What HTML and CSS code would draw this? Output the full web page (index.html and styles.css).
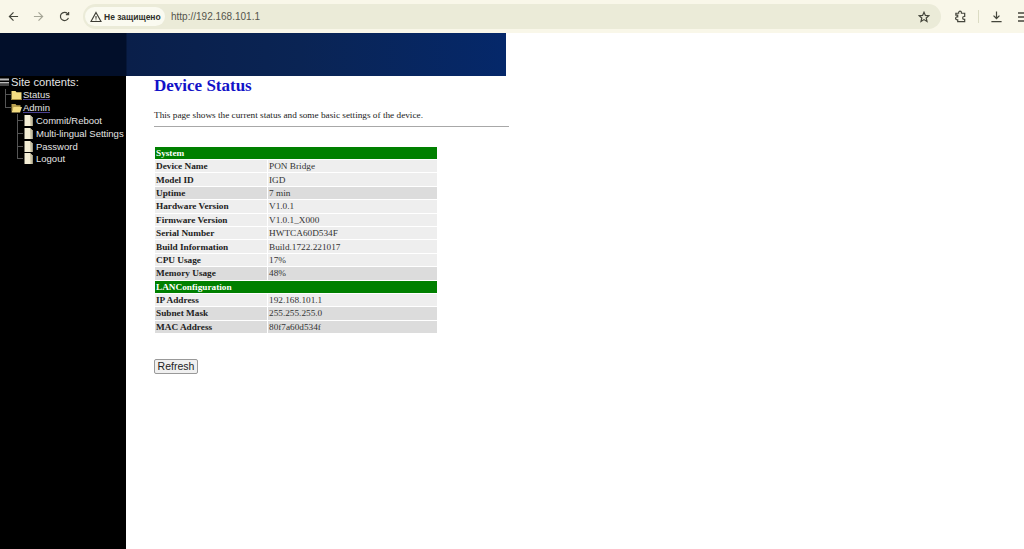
FILE: index.html
```html
<!DOCTYPE html>
<html lang="ru">
<head>
  <meta charset="UTF-8" />
  <title>Device Status</title>
  <link rel="stylesheet" href="styles.css">
</head>
<body>
  <header class="toolbar">
    <svg class="tool-icon back" viewBox="0 0 12 12"><path d="M11 6H1.500M6 1.500L1.500 6 6 10.500"/></svg>
    <svg class="tool-icon forward" viewBox="0 0 12 12"><path d="M1 6h9.500M6 1.500L10.500 6 6 10.500"/></svg>
    <svg class="tool-icon reload" viewBox="0 0 12 12"><path d="M10.300 7.500A4.500 4.500 0 1 1 9.300 2.800L10.500 4M10.500 1v3h-3"/></svg>
    <div class="omnibox">
      <div class="security">
        <svg class="warn" viewBox="0 0 12 12"><path d="M6 1.500L11 10.500H1zM6 5v2.800M6 8.500v.8"/></svg>
        <span>Не защищено</span>
      </div>
      <span class="url">http://192.168.101.1</span>
      <svg class="star" viewBox="0 0 12 12"><path d="M6 1.200l1.400 3.200 3.400.3-2.600 2.300.8 3.400L6 8.600l-3 1.800.8-3.400L1.200 4.700l3.400-.3z"/></svg>
    </div>
    <svg class="tool-icon ext" viewBox="0 0 14 14"><path d="M2 3.500h3V2.800a1.500 1.500 0 0 1 3 0v.7h3.500V7h-.7a1.500 1.500 0 0 0 0 3h.7v2.500H4v-2h-.8a1.500 1.500 0 0 1 0-3H4V5.500H2z"/></svg>
    <span class="tool-sep"></span>
    <svg class="tool-icon download" viewBox="0 0 14 14"><path d="M7 1.500v7.500M3.800 6L7 9.200 10.200 6M1.500 12.500h11"/></svg>
    <svg class="tool-icon menu" viewBox="0 0 14 14"><path d="M1 3h12M1 7h12M1 11h8"/></svg>
  </header>

  <div class="banner"></div>

  <div class="page">
    <nav class="sidebar">
      <div class="tree-root">
        <svg class="ico-root" viewBox="0 0 10 10"><path d="M0 1.500h9v2H0zM0 5h9v1.500H0z" fill="#bbb"/><path d="M0 7.500h9v1H0z" fill="#888"/></svg>
        <span>Site contents:</span>
      </div>
      <ul class="tree">
        <li class="branch"><svg class="ico-folder" viewBox="0 0 11 10"><path d="M.5 1h4l1 1.200h5V10H.5z" fill="#f3dc82"/><path d="M.5 9h10v1H.5z" fill="#a89040"/></svg><a href="#status">Status</a></li>
        <li class="branch last"><svg class="ico-folder" viewBox="0 0 11 10"><path d="M.5 1h4l1 1.200h4V5H2.500L.5 9z" fill="#b8a050"/><path d="M2.500 4H11L9 9.500H.5z" fill="#f3dc82"/></svg><a href="#admin">Admin</a></li>
        <li class="leaf"><svg class="ico-page" viewBox="0 0 10 11"><path d="M1 0h5.500L9 2.500V11H1z" fill="#f4eed6"/><path d="M6.500 0L9 2.500V11H7z" fill="#c8c0a0"/></svg><span>Commit/Reboot</span></li>
        <li class="leaf"><svg class="ico-page" viewBox="0 0 10 11"><path d="M1 0h5.500L9 2.500V11H1z" fill="#f4eed6"/><path d="M6.500 0L9 2.500V11H7z" fill="#c8c0a0"/></svg><span>Multi-lingual Settings</span></li>
        <li class="leaf"><svg class="ico-page" viewBox="0 0 10 11"><path d="M1 0h5.500L9 2.500V11H1z" fill="#f4eed6"/><path d="M6.500 0L9 2.500V11H7z" fill="#c8c0a0"/></svg><span>Password</span></li>
        <li class="leaf last"><svg class="ico-page" viewBox="0 0 10 11"><path d="M1 0h5.500L9 2.500V11H1z" fill="#f4eed6"/><path d="M6.500 0L9 2.500V11H7z" fill="#c8c0a0"/></svg><span>Logout</span></li>
      </ul>
    </nav>

    <main class="content">
      <h1>Device Status</h1>
      <p class="intro">This page shows the current status and some basic settings of the device.</p>
      <hr class="rule" />

      <table class="status-table">
        <colgroup><col class="col-name"><col></colgroup>
        <tr class="section"><td colspan="2">System</td></tr>
        <tr class="light"><th>Device Name</th><td>PON Bridge</td></tr>
        <tr class="light"><th>Model ID</th><td>IGD</td></tr>
        <tr class="dark"><th>Uptime</th><td>7 min</td></tr>
        <tr class="light"><th>Hardware Version</th><td>V1.0.1</td></tr>
        <tr class="light"><th>Firmware Version</th><td>V1.0.1_X000</td></tr>
        <tr class="light"><th>Serial Number</th><td>HWTCA60D534F</td></tr>
        <tr class="light"><th>Build Information</th><td>Build.1722.221017</td></tr>
        <tr class="light"><th>CPU Usage</th><td>17%</td></tr>
        <tr class="dark"><th>Memory Usage</th><td>48%</td></tr>
        <tr class="section"><td colspan="2">LANConfiguration</td></tr>
        <tr class="light"><th>IP Address</th><td>192.168.101.1</td></tr>
        <tr class="dark"><th>Subnet Mask</th><td>255.255.255.0</td></tr>
        <tr class="dark"><th>MAC Address</th><td>80f7a60d534f</td></tr>
      </table>

      <button class="refresh" type="button">Refresh</button>
    </main>
  </div>
</body>
</html>
```

FILE: styles.css
```css
* {
  margin: 0;
  padding: 0;
  box-sizing: border-box;
}

html, body {
  height: 100%;
}

body {
  display: flex;
  flex-direction: column;
  background: #ffffff;
  color: #000000;
  overflow: hidden;
  font-family: "Liberation Serif", serif;
}

/* browser bar */
.toolbar {
  display: flex;
  align-items: center;
  flex: 0 0 33px;
  height: 33px;
  padding-left: 8px;
  background: #f9f7e9;
  font-family: "Liberation Sans", sans-serif;
}

.tool-icon {
  flex: none;
  width: 11px;
  height: 11px;
  fill: none;
  stroke: #45463c;
  stroke-width: 1.300;
}

.forward {
  margin-left: 14px;
  stroke: #a5a596;
}

.reload {
  margin-left: 15px;
}

.omnibox {
  display: flex;
  align-items: center;
  flex: 0 0 858px;
  height: 25px;
  margin-left: 13px;
  padding-left: 2px;
  background: #ebebd8;
  border-radius: 13px;
}

.security {
  display: flex;
  align-items: center;
  gap: 2px;
  width: 80px;
  height: 19px;
  padding-left: 5px;
  background: #fafaf0;
  border-radius: 10px;
  font-size: 8.500px;
  font-weight: bold;
  color: #2e2e28;
}

.warn {
  flex: none;
  width: 12px;
  height: 12px;
  fill: none;
  stroke: #3c3c34;
  stroke-width: 1.100;
}

.url {
  margin-left: 6px;
  font-size: 10px;
  color: #55554c;
}

.star {
  width: 12px;
  height: 12px;
  margin-left: auto;
  margin-right: 11px;
  fill: none;
  stroke: #45463c;
  stroke-width: 1.200;
}

.ext {
  width: 13px;
  height: 13px;
  margin-left: 13px;
}

.tool-sep {
  flex: none;
  width: 1px;
  height: 13px;
  margin-left: 11px;
  background: #dcdcc4;
}

.download {
  width: 13px;
  height: 13px;
  margin-left: 11px;
}

.menu {
  width: 14px;
  height: 14px;
  margin-left: 14px;
}

/* top picture */
.banner {
  flex: 0 0 43px;
  width: 506px;
  background: linear-gradient(90deg, #020f2a 0, #020f2a 126px, #0a1f4a 127px, #0a2454 300px, #05286a 100%);
}

.page {
  display: flex;
  flex: 1;
  min-height: 0;
}

/* left tree */
.sidebar {
  flex: 0 0 126px;
  background: #000000;
  color: #e4e4e4;
  font-family: "Liberation Sans", sans-serif;
  font-size: 9.500px;
}

.tree-root {
  display: flex;
  align-items: center;
  height: 12.600px;
  font-size: 11.200px;
}

.ico-root {
  width: 10px;
  height: 10px;
  margin-right: 1px;
}

.tree {
  list-style: none;
}

.tree li {
  display: flex;
  align-items: center;
  height: 12.800px;
  white-space: nowrap;
  background-repeat: no-repeat;
}

/* connector lines of the tree */
.branch {
  padding-left: 11px;
  background-image: linear-gradient(#555, #555), linear-gradient(#555, #555);
  background-size: 1px 100%, 6px 1px;
  background-position: 5px 0, 5px 50%;
}

.branch.last {
  background-size: 1px 50%, 6px 1px;
}

.leaf {
  padding-left: 23px;
  background-image: linear-gradient(#555, #555), linear-gradient(#555, #555);
  background-size: 1px 100%, 6px 1px;
  background-position: 17px 0, 17px 50%;
}

.leaf.last {
  background-size: 1px 50%, 6px 1px;
}

.tree a {
  color: #e4e4e4;
  text-decoration: underline;
  text-decoration-color: #4a3f90;
}

.ico-folder {
  flex: none;
  width: 11px;
  height: 10px;
  margin-right: 1px;
}

.ico-page {
  flex: none;
  width: 11px;
  height: 11px;
  margin-right: 2px;
}

/* main part */
.content {
  flex: 1;
  padding-left: 28px;
}

h1 {
  font-size: 17px;
  line-height: 20px;
  color: #1212c8;
}

.intro {
  margin-top: 13px;
  font-size: 9.250px;
  line-height: 12px;
  color: #222222;
}

.rule {
  width: 355px;
  height: 1px;
  margin-top: 5px;
  border: 0;
  background: #a8a8a8;
}

.status-table {
  width: 284px;
  margin-top: 18.600px;
  border-collapse: separate;
  border-spacing: 1px;
  font-size: 9.250px;
  table-layout: fixed;
}

.col-name {
  width: 112px;
}

.status-table tr {
  height: 12.400px;
}

.status-table th {
  padding-left: 1px;
  text-align: left;
  font-weight: bold;
  color: #222222;
}

.status-table td {
  padding-left: 1px;
  color: #333333;
}

.light th, .light td {
  background: #eeeeee;
}

.dark th, .dark td {
  background: #dcdcdc;
}

.status-table .section td {
  background: #008000;
  color: #ffffff;
  font-weight: bold;
}

.refresh {
  display: block;
  width: 44px;
  height: 15px;
  margin-top: 25.400px;
  background: #f0f0f0;
  border: 1px solid #999999;
  border-radius: 2px;
  font-family: "Liberation Sans", sans-serif;
  font-size: 10.500px;
  line-height: 13px;
  color: #222222;
}
```
